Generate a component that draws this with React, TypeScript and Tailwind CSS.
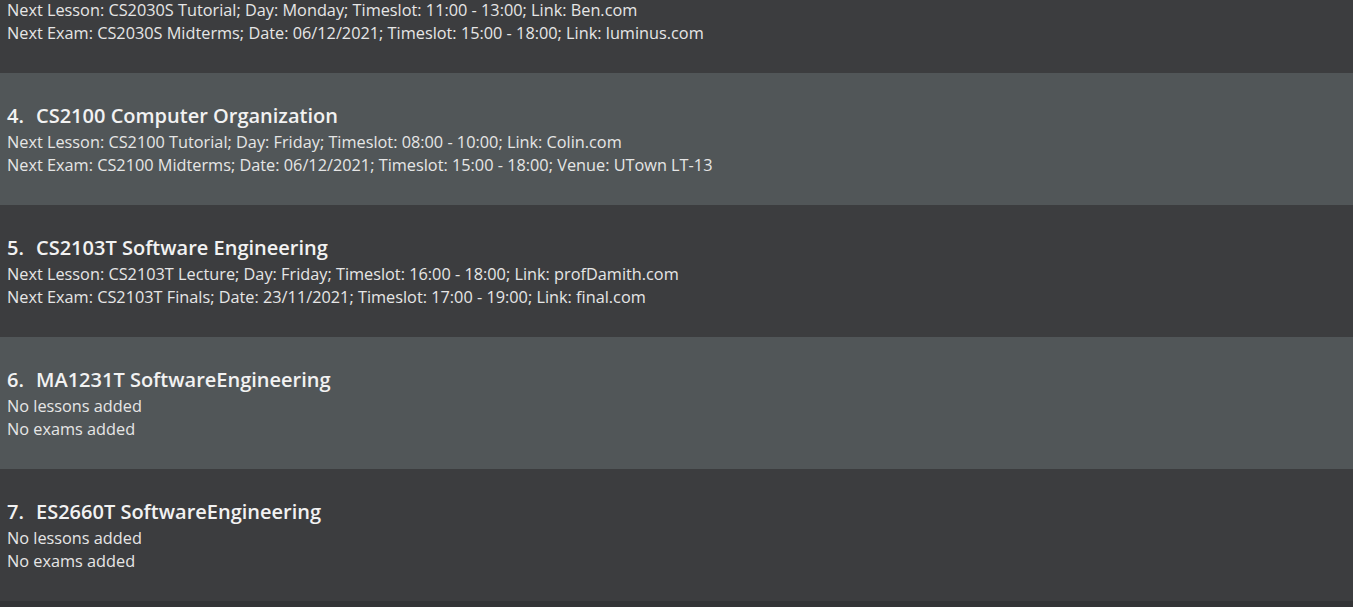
const modules: Array<{
	code: string;
	name: string;
	lesson: string;
	exam: string;
}> = [
	{
		code: "CS2030S",
		name: "Programming Methodology II",
		lesson:
			"Next Lesson: CS2030S Tutorial; Day: Monday; Timeslot: 11:00 - 13:00; Link: Ben.com",
		exam: "Next Exam: CS2030S Midterms; Date: 06/12/2021; Timeslot: 15:00 - 18:00; Link: luminus.com",
	},
	{
		code: "CS2100",
		name: "Computer Organization",
		lesson:
			"Next Lesson: CS2100 Tutorial; Day: Friday; Timeslot: 08:00 - 10:00; Link: Colin.com",
		exam: "Next Exam: CS2100 Midterms; Date: 06/12/2021; Timeslot: 15:00 - 18:00; Venue: UTown LT-13",
	},
	{
		code: "CS2103T",
		name: "Software Engineering",
		lesson:
			"Next Lesson: CS2103T Lecture; Day: Friday; Timeslot: 16:00 - 18:00; Link: profDamith.com",
		exam: "Next Exam: CS2103T Finals; Date: 23/11/2021; Timeslot: 17:00 - 19:00; Link: final.com",
	},
	{
		code: "MA1231T",
		name: "SoftwareEngineering",
		lesson: "No lessons added",
		exam: "No exams added",
	},
	{
		code: "ES2660T",
		name: "SoftwareEngineering",
		lesson: "No lessons added",
		exam: "No exams added",
	},
];

export default function App() {
	return (
		<div
			className="h-[607px] overflow-hidden bg-[#333436]"
			style={{ fontFamily: '"Open Sans", "Noto Sans", sans-serif' }}
		>
			{/* list is scrolled: the third module's card is partly above the top */}
			<div className="-mt-[59px] flex flex-col">
				{modules.map((m, i) => (
					<div
						key={m.code}
						className={
							i % 2 === 0
								? "h-[132px] bg-[#3c3d3f] pl-[7px] pt-[31px]"
								: "h-[132px] bg-[#515658] pl-[7px] pt-[31px]"
						}
					>
						<div className="flex text-[20px] font-semibold leading-[24px] text-[#f2f2f2]">
							<span className="w-[29px]">{i + 3}.</span>
							<span>
								{m.code} {m.name}
							</span>
						</div>
						<div className="mt-[3px] text-[16.3px] leading-[23px] text-[#e6e6e6]">
							<div>{m.lesson}</div>
							<div>{m.exam}</div>
						</div>
					</div>
				))}
			</div>
		</div>
	);
}
